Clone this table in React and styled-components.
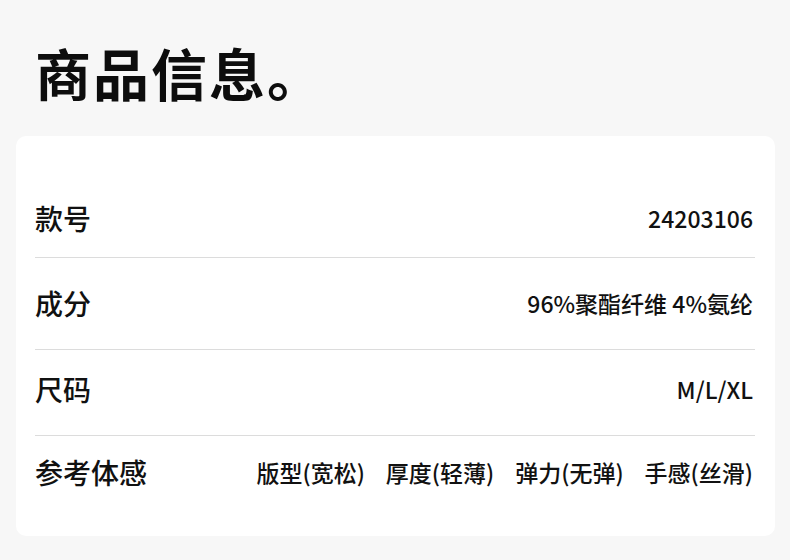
import React from "react";
import styled, { createGlobalStyle } from "styled-components";

const GlobalStyles = createGlobalStyle`
  html, body, #root {
    margin: 0;
    padding: 0;
    width: 100%;
    height: 100%;
  }
  body {
    background-color: #f7f7f7;
    color: #111;
    font-family: "Noto Sans CJK SC", "Noto Sans", sans-serif;
  }
`;

const Page = styled.div`
  width: 790px;
  height: 560px;
  padding: 36px 15px 0 16px;
  box-sizing: border-box;
`;

const Title = styled.h1`
  margin: 0 0 0 19px;
  font-size: 56px;
  font-weight: 700;
  line-height: 72px;
  letter-spacing: 2px;
  color: #0d0d0d;
`;

const Card = styled.div`
  margin-top: 28px;
  background-color: #fff;
  border-radius: 10px;
  padding: 44px 20px 26px 19px;
`;

const Row = styled.div`
  display: flex;
  align-items: center;
  justify-content: space-between;
  height: ${(p) => p.h}px;
  padding-bottom: ${(p) => p.lift || 0}px;
  border-bottom: ${(p) => (p.last ? "none" : "1px solid #dcdcdc")};
  box-sizing: border-box;
`;

const Label = styled.span`
  font-size: 28px;
  font-weight: 500;
  color: #111;
`;

const Value = styled.span`
  margin-right: 2px;
  font-size: 23px;
  font-weight: 500;
  color: #111;
  white-space: pre;
`;

const Feel = styled.div`
  display: flex;
  gap: 21px;
  margin-right: 2px;
  font-size: 23px;
  font-weight: 500;
`;

const FeelItem = styled.span`
  white-space: nowrap;
`;

const rows = [
  { label: "款号", value: "24203106", h: 78, lift: 2 },
  { label: "成分", value: "96%聚酯纤维 4%氨纶", h: 92, lift: 2 },
  { label: "尺码", value: "M/L/XL", h: 86, lift: 8 },
];

const feel = ["版型(宽松)", "厚度(轻薄)", "弹力(无弹)", "手感(丝滑)"];

export default function App() {
  return (
    <>
      <GlobalStyles />
      <Page>
        <Title>商品信息。</Title>
        <Card>
          {rows.map((r) => (
            <Row key={r.label} h={r.h} lift={r.lift}>
              <Label>{r.label}</Label>
              <Value>{r.value}</Value>
            </Row>
          ))}
          <Row h={74} lift={2} last>
            <Label>参考体感</Label>
            <Feel>
              {feel.map((f) => (
                <FeelItem key={f}>{f}</FeelItem>
              ))}
            </Feel>
          </Row>
        </Card>
      </Page>
    </>
  );
}
